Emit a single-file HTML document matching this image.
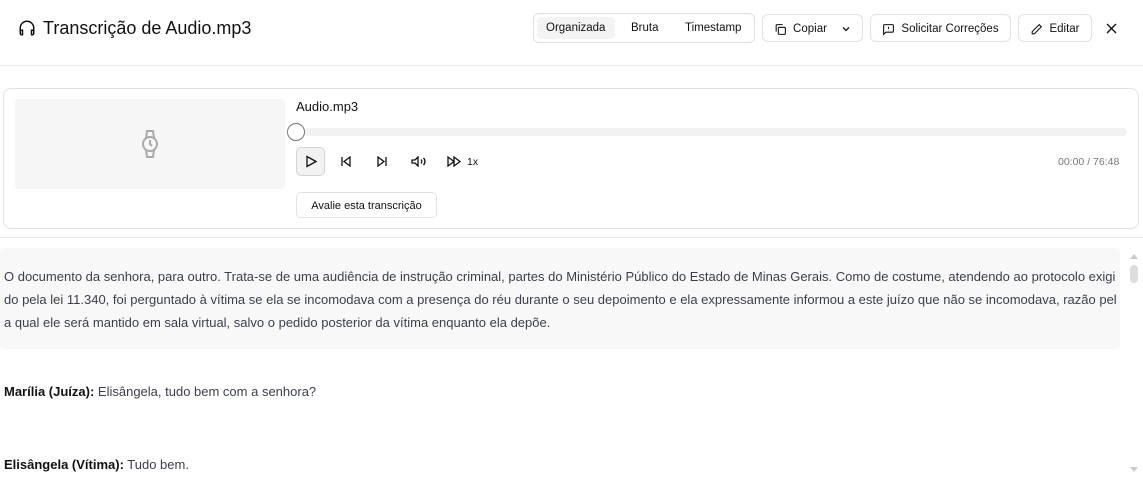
<!DOCTYPE html>
<html><head><meta charset="utf-8"><style>
*{box-sizing:border-box;margin:0;padding:0}
body{width:1143px;height:490px;overflow:hidden;background:#fff;font-family:"Liberation Sans",sans-serif;color:#111;position:relative}
.abs{position:absolute}
.btn{position:absolute;top:14px;height:28px;border:1px solid #e2e2e2;border-radius:6px;font-size:11.5px;display:flex;align-items:center;justify-content:center;gap:6px;color:#111;background:#fff;padding-top:2px}
.txt{font-size:13px;color:#3b3f4a;white-space:nowrap}
</style></head><body>
<svg class="abs" style="left:18px;top:19px" width="18" height="18" viewBox="0 0 24 24" fill="none" stroke="#111" stroke-width="2" stroke-linecap="round"><path d="M3 18v-6a9 9 0 0 1 18 0v6"/><path d="M21 19a2 2 0 0 1-2 2h-1v-6h3zM3 19a2 2 0 0 0 2 2h1v-6H3z"/></svg>
<div class="abs" style="left:43px;top:18px;font-size:18px;color:#111">Transcrição de Audio.mp3</div>

<div class="abs" style="left:533px;top:13px;width:222px;height:30px;border:1px solid #e2e2e2;border-radius:6px"></div>
<div class="abs" style="left:537px;top:17px;width:78px;height:22px;background:#f3f3f3;border-radius:4px"></div>
<div class="abs" style="left:546px;top:22px;font-size:11.5px">Organizada</div>
<div class="abs" style="left:631px;top:22px;font-size:11.5px">Bruta</div>
<div class="abs" style="left:685px;top:22px;font-size:11.5px">Timestamp</div>

<div class="btn" style="left:762px;width:101px"><svg width="13" height="13" viewBox="0 0 24 24" fill="none" stroke="#111" stroke-width="2"><rect x="8" y="8" width="13" height="13" rx="2"/><path d="M4 16V5a2 2 0 0 1 2-2h10"/></svg>Copiar <svg style="margin-left:8px" width="10" height="10" viewBox="0 0 10 10" fill="none" stroke="#111" stroke-width="1.3"><path d="M2 3.5l3 3 3-3"/></svg></div>
<div class="btn" style="left:870px;width:141px"><svg width="13" height="13" viewBox="0 0 24 24" fill="none" stroke="#111" stroke-width="2"><path d="M21 15a2 2 0 0 1-2 2H7l-4 4V5a2 2 0 0 1 2-2h14a2 2 0 0 1 2 2z"/><path d="M12 7v4M12 14v.5"/></svg>Solicitar Correções</div>
<div class="btn" style="left:1018px;width:74px"><svg width="13" height="13" viewBox="0 0 24 24" fill="none" stroke="#111" stroke-width="2"><path d="M17 3l4 4L8 20H4v-4z"/></svg>Editar</div>
<svg class="abs" style="left:1106px;top:23px" width="11" height="11" viewBox="0 0 11 11" stroke="#111" stroke-width="1.4"><path d="M1 1l9 9M10 1l-9 9"/></svg>

<div class="abs" style="left:0;top:65px;width:1143px;height:1px;background:#e6e6e6"></div>

<div class="abs" style="left:3px;top:88px;width:1136px;height:141px;border:1px solid #e2e2e2;border-radius:8px"></div>
<div class="abs" style="left:15px;top:99px;width:270px;height:90px;background:#f6f6f6;border-radius:4px"></div>
<svg class="abs" style="left:138px;top:128px" width="24" height="32" viewBox="0 0 24 32" fill="none" stroke="#aaa" stroke-width="2"><circle cx="12" cy="16" r="7"/><path d="M12 12v4l2 2M8 10l1-7h6l1 7M8 22l1 7h6l1-7"/></svg>
<div class="abs" style="left:296px;top:99px;font-size:13px">Audio.mp3</div>
<div class="abs" style="left:296px;top:128px;width:831px;height:8px;background:#f2f2f2;border-radius:4px"></div>
<div class="abs" style="left:287px;top:123px;width:18px;height:18px;border:1px solid #777;border-radius:50%;background:#fff"></div>
<div class="abs" style="left:296px;top:147px;width:29px;height:29px;background:#f2f2f2;border:1px solid #d4d4d4;border-radius:5px"></div>
<svg class="abs" style="left:305px;top:155px" width="12" height="13" viewBox="0 0 12 13" fill="none" stroke="#111" stroke-width="1.3"><path d="M2 1.5l9 5-9 5z"/></svg>
<svg class="abs" style="left:340px;top:156px" width="12" height="11" viewBox="0 0 12 11" fill="none" stroke="#111" stroke-width="1.3"><path d="M2 1v9M10 1L4 5.5 10 10z"/></svg>
<svg class="abs" style="left:376px;top:156px" width="12" height="11" viewBox="0 0 12 11" fill="none" stroke="#111" stroke-width="1.3"><path d="M10 1v9M2 1l6 4.5L2 10z"/></svg>
<svg class="abs" style="left:411px;top:156px" width="16" height="11" viewBox="0 0 16 11" fill="none" stroke="#111" stroke-width="1.3"><path d="M1 4h3l3-3v9L4 7H1z M10 3.5a3 3 0 0 1 0 4M12.5 2a5 5 0 0 1 0 7"/></svg>
<svg class="abs" style="left:447px;top:156px" width="15" height="11" viewBox="0 0 15 11" fill="none" stroke="#111" stroke-width="1.3"><path d="M1 1l6 4.5L1 10zM7 1l6 4.5L7 10z"/></svg>
<div class="abs" style="left:467px;top:156px;font-size:10.5px">1x</div>
<div class="abs" style="left:1058px;top:156px;font-size:10.5px;color:#777">00:00 / 76:48</div>
<div class="abs" style="left:296px;top:192px;width:141px;height:26px;border:1px solid #e2e2e2;border-radius:5px;font-size:11px;display:flex;align-items:center;justify-content:center;padding-top:1px">Avalie esta transcrição</div>

<div class="abs" style="left:0;top:237px;width:1143px;height:1px;background:#e6e6e6"></div>
<div class="abs" style="left:0;top:248px;width:1120px;height:101px;background:#f8f8f8;border-radius:4px"></div>
<div class="abs txt" style="left:4px;top:265px;line-height:23px">
<div>O documento da senhora, para outro. Trata-se de uma audiência de instrução criminal, partes do Ministério Público do Estado de Minas Gerais. Como de costume, atendendo ao protocolo exigi</div>
<div>do pela lei 11.340, foi perguntado à vítima se ela se incomodava com a presença do réu durante o seu depoimento e ela expressamente informou a este juízo que não se incomodava, razão pel</div>
<div>a qual ele será mantido em sala virtual, salvo o pedido posterior da vítima enquanto ela depõe.</div>
</div>
<div class="abs txt" style="left:4px;top:384px"><b style="color:#111">Marília (Juíza):</b> Elisângela, tudo bem com a senhora?</div>
<div class="abs txt" style="left:4px;top:457px"><b style="color:#111">Elisângela (Vítima):</b> Tudo bem.</div>

<div class="abs" style="left:1130px;top:254px;width:0;height:0;border-left:4px solid transparent;border-right:4px solid transparent;border-bottom:5px solid #ccc"></div>
<div class="abs" style="left:1130px;top:265px;width:8px;height:18px;background:#ddd;border-radius:4px"></div>
<div class="abs" style="left:1130px;top:467px;width:0;height:0;border-left:4px solid transparent;border-right:4px solid transparent;border-top:5px solid #ccc"></div>
</body></html>
